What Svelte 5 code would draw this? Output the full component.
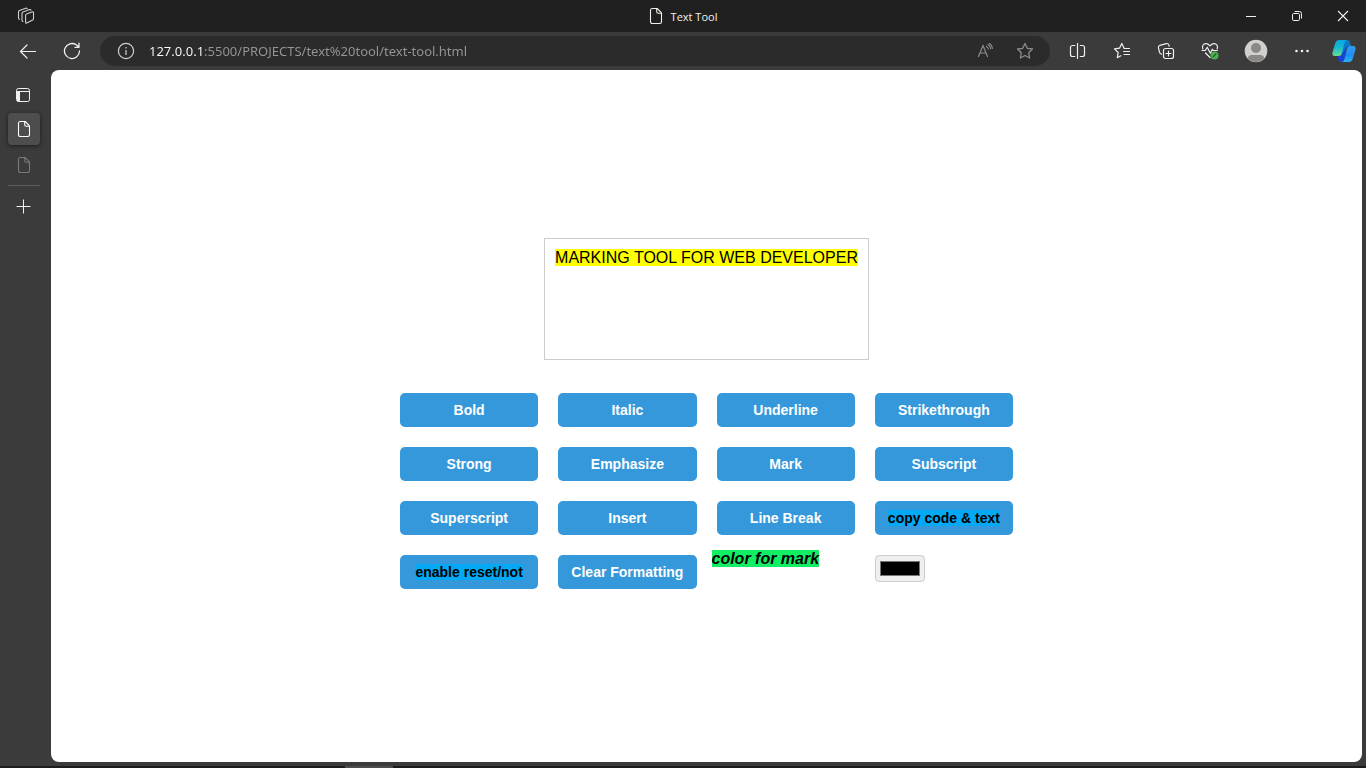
<script>
  const plainTools = [
    'Bold', 'Italic', 'Underline', 'Strikethrough',
    'Strong', 'Emphasize', 'Mark', 'Subscript',
    'Superscript', 'Insert', 'Line Break'
  ];
  let url = $state('127.0.0.1:5500/PROJECTS/text%20tool/text-tool.html');
  let markColor = $state('#000000');
</script>

{#snippet page()}
  <svg width="14" height="18" viewBox="0 0 14 18" fill="none" stroke="currentColor" stroke-width="1.1" stroke-linejoin="round">
    <path d="M3 1.500h5.200L12.500 5.800v9a1.700 1.700 0 0 1-1.700 1.700H3.200a1.700 1.700 0 0 1-1.700-1.700V3.200A1.700 1.700 0 0 1 3 1.500z" />
    <path d="M7.700 1.700v3a1.500 1.500 0 0 0 1.500 1.500h3.100" />
  </svg>
{/snippet}

<div class="browser">
  <header class="titlebar">
    <button class="workspaces" aria-label="Workspaces">
      <svg width="18" height="18" viewBox="0 0 18 18" fill="none" stroke="currentColor" stroke-width="1.1" stroke-linejoin="round" stroke-linecap="round">
        <path d="M9.500 7l6-2.200c.6-.2 1 .1 1 .7v6.300c0 .6-.3 1-.8 1.300l-6 3c-.6.3-1.100 0-1.100-.7V8.300c0-.6.3-1.100.9-1.300z" />
        <path d="M6 14.500c-.7-.2-1-.6-1-1.300V6.600c0-.8.300-1.300 1-1.600l6.500-2.400c.7-.2 1.200 0 1.500.5" />
        <path d="M2.500 12.300c-.7-.2-1-.6-1-1.300V5c0-.8.300-1.300 1-1.600L8.700 1.200c.700-.2 1.200 0 1.500.5" />
      </svg>
    </button>
    <div class="title">{@render page()}<span>Text Tool</span></div>
    <div class="window-buttons">
      <button aria-label="Minimize"><svg width="12" height="12" viewBox="0 0 12 12" stroke="currentColor"><path d="M1 6.500h10" /></svg></button>
      <button aria-label="Restore"><svg width="12" height="12" viewBox="0 0 12 12" fill="none" stroke="currentColor"><rect x="1.500" y="3.500" width="7" height="7" rx="1.200" /><path d="M3.600 1.500H8.500a2 2 0 0 1 2 2v5" /></svg></button>
      <button aria-label="Close"><svg width="12" height="12" viewBox="0 0 12 12" stroke="currentColor" stroke-width="1.100"><path d="M1 1l10 10M11 1L1 11" /></svg></button>
    </div>
  </header>

  <nav class="toolbar" aria-label="Browser toolbar">
    <button aria-label="Back">
      <svg width="18" height="16" viewBox="0 0 18 16" fill="none" stroke="currentColor" stroke-width="1.200" stroke-linecap="round" stroke-linejoin="round"><path d="M16.500 8.500H1.500M8 2L1.500 8.500 8 15" /></svg>
    </button>
    <button aria-label="Refresh">
      <svg width="18" height="18" viewBox="0 0 18 18" fill="none" stroke="currentColor" stroke-width="1.300" stroke-linecap="round" stroke-linejoin="round"><path d="M16.500 9A7.500 7.500 0 1 1 13.200 2.800L15.700 5M16 1.200V5.300H12" /></svg>
    </button>
    <div class="address">
      <button aria-label="Site information">
        <svg width="18" height="18" viewBox="0 0 18 18" fill="none" stroke="currentColor" stroke-width="1.200"><circle cx="9" cy="9" r="7.600" /><path d="M9 8v5M9 5v1.500" /></svg>
      </button>
      <input aria-label="Address" type="text" bind:value={url} spellcheck="false" />
      <button class="dim" aria-label="Read aloud">
        <svg width="18" height="18" viewBox="0 0 18 18" fill="none" stroke="currentColor" stroke-width="1.200" stroke-linecap="round"><path d="M2.500 14.500L7 3.500l4.500 11M4 11h6M10.500 4.500c1 .5 1.600 1.400 1.800 2.500M12 2.500c1.600.9 2.400 2.300 2.600 4.200M13.500 1.500c1.700 1 2.700 2.700 2.900 4.800" /></svg>
      </button>
      <button class="dim" aria-label="Add to favorites">
        <svg width="18" height="18" viewBox="0 0 18 18" fill="none" stroke="currentColor" stroke-width="1.300" stroke-linejoin="round"><path d="M9 1.500l2.300 4.800 5.200.7-3.800 3.700.9 5.300L9 13.500 4.400 16l.9-5.300L1.500 7l5.200-.7z" /></svg>
      </button>
    </div>
    <button aria-label="Split screen">
      <svg width="18" height="18" viewBox="0 0 18 18" fill="none" stroke="currentColor" stroke-width="1.200"><path d="M8.500 1v16" /><path d="M6.200 3.500H3.500a2 2 0 0 0-2 2v7a2 2 0 0 0 2 2h2.700M10.800 3.500h2.700a2 2 0 0 1 2 2v7a2 2 0 0 1-2 2h-2.700" /></svg>
    </button>
    <button aria-label="Favorites">
      <svg width="18" height="18" viewBox="0 0 18 18" fill="none" stroke="currentColor" stroke-width="1.200" stroke-linejoin="round" stroke-linecap="round"><path d="M11 5.900L8.800 1.500 6.500 6.200l-5 .7 3.700 3.600-.9 5.200 3.500-1.900M11 6.500h5.500M10.500 9.500h6M11 12.500h5.500" /></svg>
    </button>
    <button aria-label="Collections">
      <svg width="18" height="18" viewBox="0 0 18 18" fill="none" stroke="currentColor" stroke-width="1.200" stroke-linecap="round"><rect x="6.500" y="6.500" width="10" height="10" rx="2" /><path d="M11.500 9v5M9 11.500h5M4.500 12.200c-1-.2-1.600-.7-1.800-1.600L1.400 5.800c-.2-1.200.3-2.100 1.500-2.500l6.400-1.700c1.200-.3 2.100.2 2.500 1.300l.4 1.300" /></svg>
    </button>
    <button aria-label="Browser essentials">
      <svg width="18" height="18" viewBox="0 0 18 18" fill="none" stroke="currentColor" stroke-width="1.200" stroke-linejoin="round" stroke-linecap="round"><path d="M1.900 7C.6 4.200 2.300 1.600 5 1.600c1.700 0 2.800.9 4 2.200 1.200-1.300 2.300-2.200 4-2.200 2.700 0 4.400 2.600 3.100 5.400M1 8.500h3.300l2-3.300 3 6 2-4 1 1.300h4M4.500 11l4.500 4.500" /><circle cx="13.500" cy="13.500" r="4" fill="#4caf50" stroke="none" /><path d="M12 14.800l2.800-2.800" stroke="#245b28" /></svg>
    </button>
    <button class="profile" aria-label="Profile">
      <svg width="24" height="24" viewBox="0 0 24 24"><defs><clipPath id="face"><circle cx="12" cy="12" r="11" /></clipPath></defs><circle cx="12" cy="12" r="11.300" fill="#d2d0ce" /><circle cx="12" cy="9" r="5" fill="#8a8886" /><path d="M4 24v-5c0-2 1.500-3 3.500-3h9c2 0 3.500 1 3.500 3v5z" fill="#8a8886" clip-path="url(#face)" /></svg>
    </button>
    <button aria-label="Settings and more">
      <svg width="16" height="4" viewBox="0 0 16 4" fill="currentColor"><circle cx="2.500" cy="2" r="1.300" /><circle cx="8" cy="2" r="1.300" /><circle cx="13.500" cy="2" r="1.300" /></svg>
    </button>
    <button class="copilot" aria-label="Copilot">
      <svg width="24" height="24" viewBox="0 0 24 24">
        <defs>
          <linearGradient id="left" x1="0" y1="0" x2="0" y2="1"><stop offset="0" stop-color="#08a9df" /><stop offset=".45" stop-color="#16b7cf" /><stop offset="1" stop-color="#66df91" /></linearGradient>
          <linearGradient id="right" x1="0" y1="0" x2="0" y2="1"><stop offset="0" stop-color="#2f9df0" /><stop offset=".6" stop-color="#1f8df0" /><stop offset="1" stop-color="#29b6f6" /></linearGradient>
        </defs>
        <path d="M10 1h5.500c1.800 0 2.300 1.500 2.700 3.500l.8 2.500h-3.500L9 17z" fill="#087bc8" />
        <path d="M5.500 17H9l6-10-2 12.500c-.6 2-1.500 3.500-3.200 3.500H9c-2 0-2.500-2-3.500-6z" fill="#1742d8" />
        <path d="M7.500 1H15c-1.500.4-2 1.500-2.500 3L9.700 14.500C9.200 16.300 8.400 17 6.700 17H2.800C.8 17 0 15.500.5 13.500L3.300 4C4 2 5.300 1 7.500 1z" fill="url(#left)" />
        <path d="M16.500 23H10c1.500-.4 2-1.500 2.500-3l2.500-10.500C15.500 7.700 16.300 7 18 7h3.200c2 0 2.800 1.500 2.300 3.500L20.700 20c-.7 2-2 3-4.200 3z" fill="url(#right)" />
      </svg>
    </button>
  </nav>

  <div class="body">
    <aside class="tabs" aria-label="Tabs">
      <button class="actions" aria-label="Tab actions">
        <svg width="14" height="14" viewBox="0 0 14 14" fill="none" stroke="currentColor"><rect x=".5" y=".5" width="13" height="13" rx="2" /><path d="M.5 3.500h13" /><path d="M2.500 3.500v10" stroke-width="3" /></svg>
      </button>
      <button class="active" aria-label="Text Tool">{@render page()}</button>
      <button class="sleeping" aria-label="New page">{@render page()}</button>
      <hr />
      <button class="new" aria-label="New tab"><svg width="15" height="15" viewBox="0 0 15 15" stroke="currentColor"><path d="M7.500 .5v14M.5 7.500h14" /></svg></button>
    </aside>

    <main>
      <div class="editor" contenteditable="true" role="textbox" tabindex="0" aria-label="Editor" spellcheck="false"><mark>MARKING TOOL FOR WEB DEVELOPER</mark></div>
      <div class="tools">
        {#each plainTools as tool}
          <button>{tool}</button>
        {/each}
        <button><mark>copy code &amp; text</mark></button>
        <button><mark>enable reset/not</mark></button>
        <button>Clear Formatting</button>
        <label for="mark-color"><mark>color for mark</mark></label>
        <input id="mark-color" type="color" bind:value={markColor} />
      </div>
    </main>
  </div>
  <footer><span></span></footer>
</div>

<style>
  :global(body) {
    margin: 0;
    background: #3b3b3b;
  }
  .browser {
    display: flex;
    flex-direction: column;
    min-height: 100vh;
    background: #3b3b3b;
    color: #f0f0f0;
    font-family: "Open Sans", "Noto Sans", sans-serif;
  }
  button {
    display: flex;
    align-items: center;
    justify-content: center;
    padding: 0;
    border: 0;
    background: none;
    color: inherit;
    font: inherit;
  }
  svg {
    display: block;
    flex: none;
  }
  .titlebar {
    display: grid;
    grid-template-columns: 1fr auto 1fr;
    height: 32px;
    background: #202020;
  }
  .workspaces {
    width: 52px;
    color: #d0d0d0;
  }
  .title {
    display: flex;
    align-items: center;
    gap: 8px;
    font-size: 11px;
  }
  .window-buttons {
    display: flex;
    justify-content: flex-end;
  }
  .window-buttons button {
    width: 46px;
  }
  .toolbar {
    display: flex;
    align-items: center;
    height: 38px;
    padding: 0 2px 0 6px;
  }
  .toolbar > button {
    width: 44px;
    height: 32px;
  }
  .toolbar > .profile {
    width: 48px;
  }
  .toolbar > .copilot {
    width: 40px;
  }
  .address {
    display: flex;
    align-items: center;
    flex: 1;
    height: 30px;
    margin: 0 6px;
    padding: 0 5px 0 6px;
    border-radius: 15px;
    background: #2b2b2b;
  }
  .address button {
    width: 40px;
    height: 28px;
    color: #d0d0d0;
  }
  .address .dim {
    color: #8c8c8c;
  }
  .address input {
    flex: 1;
    min-width: 0;
    margin: 0;
    padding: 0 3px;
    border: 0;
    outline: 0;
    background: linear-gradient(90deg, #ffffff 57px, #969696 57px) text;
    color: transparent;
    font: 13px/20px "Noto Sans", "Open Sans", sans-serif;
  }
  .body {
    display: flex;
    flex: 1;
    padding: 0 4px 4px 0;
  }
  .tabs {
    display: flex;
    flex-direction: column;
    gap: 4px;
    box-sizing: border-box;
    width: 51px;
    padding: 11px 8px 8px;
  }
  .tabs button {
    width: 32px;
    height: 32px;
    border-radius: 4px;
  }
  .tabs .actions {
    width: 30px;
    height: 28px;
  }
  .tabs .new {
    width: 31px;
  }
  .tabs .active {
    background: #4d4d4d;
    box-shadow: 0 1px 4px #1c1c1c;
    color: #ffffff;
  }
  .tabs .sleeping {
    color: #7a7a7a;
  }
  .tabs hr {
    width: 32px;
    height: 1px;
    margin: 0;
    border: 0;
    background: #5c5c5c;
  }
  main {
    display: flex;
    flex: 1;
    flex-direction: column;
    align-items: center;
    justify-content: center;
    gap: 28px;
    border-radius: 8px;
    background: #ffffff;
    color: #000000;
    font: 16px "Liberation Sans", Arial, sans-serif;
  }
  .editor {
    min-height: 100px;
    padding: 10px;
    border: 1px solid #cccccc;
  }
  .tools {
    display: grid;
    grid-template-columns: repeat(4, 1fr);
    gap: 10px;
    width: 100%;
    max-width: 623px;
  }
  .tools button {
    margin: 5px;
    padding: 9px 12px;
    border-radius: 5px;
    background: #3498db;
    color: #ffffff;
    font-size: 14px;
    font-weight: bold;
    line-height: 16px;
    white-space: nowrap;
  }
  .tools button mark {
    background: #03a9f4;
  }
  .tools label {
    font-style: italic;
    font-weight: bold;
  }
  .tools label mark {
    background: #10ee64;
  }
  .tools input {
    appearance: none;
    box-sizing: border-box;
    width: 50px;
    height: 27px;
    margin: 5px;
    padding: 1px 2px;
    border: 1px solid #cccccc;
    border-radius: 4px;
    background: #efefef;
  }
  footer {
    height: 2px;
    background: #1c1c1c;
  }
  footer span {
    display: block;
    width: 48px;
    height: 2px;
    margin-left: 345px;
    background: #4d4d4d;
  }
</style>
